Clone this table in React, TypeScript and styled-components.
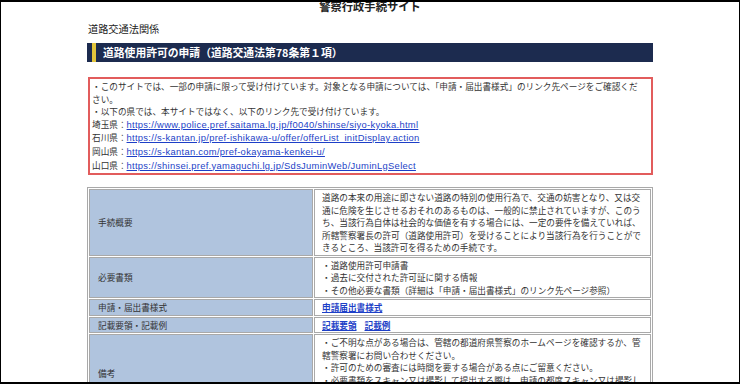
import React from 'react';
import styled, { createGlobalStyle } from 'styled-components';

const GlobalStyle = createGlobalStyle`
  html, body {
    margin: 0;
    padding: 0;
    background: #fff;
  }
  * {
    box-sizing: border-box;
  }
  body {
    font-family: 'Noto Sans CJK JP', 'Noto Sans', sans-serif;
    color: #333;
  }
`;

const Frame = styled.div`
  height: 384px;
  overflow: hidden;
  border: 1px solid #000;
  border-top-width: 2px;
  border-bottom-width: 2px;
  background: #fff;
`;

const Page = styled.main`
  width: 566px;
  margin: 0 auto;
`;

const SiteTitle = styled.h1`
  margin: -3px 0 0;
  font-size: 11.3px;
  line-height: 14px;
  font-weight: bold;
  text-align: center;
  color: #222;
`;

const SectionTitle = styled.h2`
  margin: 9px 0 0 1px;
  font-size: 10.2px;
  line-height: 14px;
  font-weight: normal;
  color: #222;
`;

const HeadingBar = styled.h3`
  display: flex;
  align-items: stretch;
  margin: 7px 0 0;
  padding: 0 0 0 5px;
  height: 19px;
  background: #1c2b4f;
`;

const Stripe = styled.span`
  width: 4px;
  background: #e2c53c;
`;

const HeadingText = styled.span`
  margin-left: 7px;
  align-self: center;
  font-size: 10.8px;
  line-height: 15px;
  font-weight: bold;
  color: #fff;
`;

const Notice = styled.div`
  margin: 15px 0 0 1px;
  padding: 1px 2px;
  border: 2px solid #e25c5c;
  font-size: 8.65px;
  line-height: 12.6px;
  white-space: nowrap;
`;

const UrlLink = styled.a`
  font-family: 'Liberation Sans', 'Noto Sans CJK JP', sans-serif;
  font-size: 9.4px;
  letter-spacing: 0.3px;
  color: #1d3fc7;
  text-decoration: underline;
`;

const InfoTable = styled.table`
  margin-top: 12px;
  width: 100%;
  table-layout: fixed;
  border-collapse: separate;
  border-spacing: 1px;
  border: 1px solid #a9a9a9;
  font-size: 8.65px;
  line-height: 12.5px;
`;

const LabelCell = styled.td`
  width: 224px;
  padding: 1px 8px;
  border: 1px solid #a9a9a9;
  background: #b0c4de;
  vertical-align: middle;
  white-space: nowrap;
`;

const ValueCell = styled.td`
  padding: 1px 7px;
  border: 1px solid #a9a9a9;
  background: #fff;
  vertical-align: middle;
  white-space: nowrap;
`;

const TextLink = styled.a<{ $gap?: boolean }>`
  color: #1d3fc7;
  font-weight: bold;
  text-decoration: underline;
  margin-left: ${({ $gap }) => ($gap ? '8px' : '0')};
`;

const Lines = ({ lines }: { lines: string[] }): JSX.Element => (
  <>
    {lines.map((line, i) => (
      <React.Fragment key={i}>
        {i > 0 && <br />}
        {line}
      </React.Fragment>
    ))}
  </>
);

const linkSites = [
  { pref: '埼玉県', url: 'https://www.police.pref.saitama.lg.jp/f0040/shinse/siyo-kyoka.html' },
  { pref: '石川県', url: 'https://s-kantan.jp/pref-ishikawa-u/offer/offerList_initDisplay.action' },
  { pref: '岡山県', url: 'https://s-kantan.com/pref-okayama-kenkei-u/' },
  { pref: '山口県', url: 'https://shinsei.pref.yamaguchi.lg.jp/SdsJuminWeb/JuminLgSelect' },
];

const overview = [
  '道路の本来の用途に即さない道路の特別の使用行為で、交通の妨害となり、又は交',
  '通に危険を生じさせるおそれのあるものは、一般的に禁止されていますが、このう',
  'ち、当該行為自体は社会的な価値を有する場合には、一定の要件を備えていれば、',
  '所轄警察署長の許可（道路使用許可）を受けることにより当該行為を行うことがで',
  'きるところ、当該許可を得るための手続です。',
];

const documents = [
  '・道路使用許可申請書',
  '・過去に交付された許可証に関する情報',
  '・その他必要な書類（詳細は「申請・届出書様式」のリンク先ページ参照）',
];

const remarks = [
  '・ご不明な点がある場合は、管轄の都道府県警察のホームページを確認するか、管',
  '轄警察署にお問い合わせください。',
  '・許可のための審査には時間を要する場合がある点にご留意ください。',
  '・必要書類をスキャン又は撮影して提出する際は、申請の都度スキャン又は撮影し',
  'たものを提出してください。',
  '・申請内容によっては、別途書類の提出を求める場合があります。',
];

function App(): JSX.Element {
  return (
    <>
      <GlobalStyle />
      <Frame>
        <Page>
          <SiteTitle>警察行政手続サイト</SiteTitle>
          <SectionTitle>道路交通法関係</SectionTitle>
          <HeadingBar>
            <Stripe />
            <HeadingText>道路使用許可の申請（道路交通法第78条第１項）</HeadingText>
          </HeadingBar>
          <Notice>
            ・このサイトでは、一部の申請に限って受け付けています。対象となる申請については、「申請・届出書様式」のリンク先ページをご確認くだ
            <br />
            さい。
            <br />
            ・以下の県では、本サイトではなく、以下のリンク先で受け付けています。
            {linkSites.map((site) => (
              <React.Fragment key={site.pref}>
                <br />
                {site.pref}：<UrlLink href="#">{site.url}</UrlLink>
              </React.Fragment>
            ))}
          </Notice>
          <InfoTable>
            <tbody>
              <tr>
                <LabelCell>手続概要</LabelCell>
                <ValueCell>
                  <Lines lines={overview} />
                </ValueCell>
              </tr>
              <tr>
                <LabelCell>必要書類</LabelCell>
                <ValueCell>
                  <Lines lines={documents} />
                </ValueCell>
              </tr>
              <tr>
                <LabelCell>申請・届出書様式</LabelCell>
                <ValueCell>
                  <TextLink href="#">申請届出書様式</TextLink>
                </ValueCell>
              </tr>
              <tr>
                <LabelCell>記載要領・記載例</LabelCell>
                <ValueCell>
                  <TextLink href="#">記載要領</TextLink>
                  <TextLink href="#" $gap>
                    記載例
                  </TextLink>
                </ValueCell>
              </tr>
              <tr>
                <LabelCell>備考</LabelCell>
                <ValueCell>
                  <Lines lines={remarks} />
                </ValueCell>
              </tr>
            </tbody>
          </InfoTable>
        </Page>
      </Frame>
    </>
  );
}

export default App;
